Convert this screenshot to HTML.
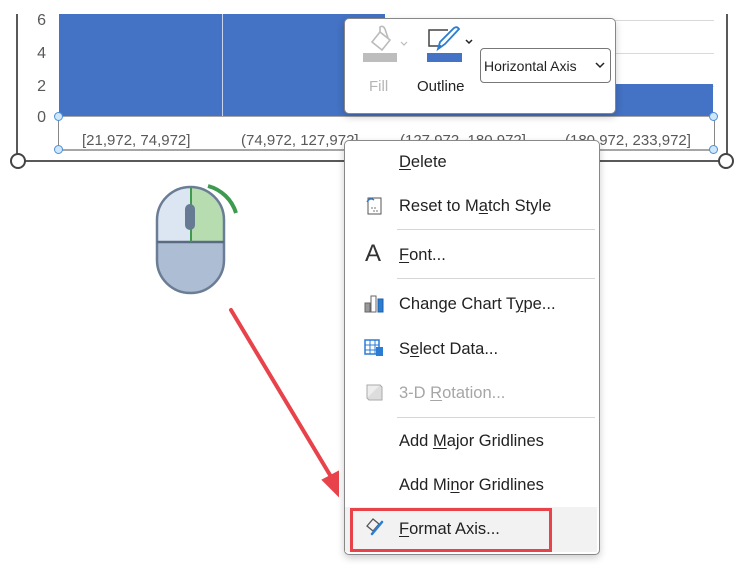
<!DOCTYPE html>
<html><head><meta charset="utf-8"><style>
body{margin:0;width:744px;height:565px;background:#fff;position:relative;overflow:hidden;font-family:"Liberation Sans",sans-serif;}
.a{position:absolute}
.yl{position:absolute;left:30px;font-size:16px;color:#595959;width:16px;text-align:right}
.xl{position:absolute;top:132px;font-size:15px;color:#595959;white-space:nowrap}
.mi{position:absolute;left:399px;font-size:16.5px;color:#222;white-space:nowrap}
.sep{position:absolute;left:397px;width:198px;height:1px;background:#d6d6d6}
u{text-decoration:underline;text-underline-offset:2px}
</style></head><body>
<div class="a" style="left:16px;top:14px;width:2px;height:147px;background:#595959"></div>
<div class="a" style="left:726px;top:14px;width:2px;height:147px;background:#595959"></div>
<div class="a" style="left:18px;top:160px;width:708px;height:2px;background:#595959"></div>
<div class="a" style="left:10px;top:153px;width:12px;height:12px;border:2.5px solid #444;border-radius:50%;background:#fff"></div>
<div class="a" style="left:718px;top:153px;width:12px;height:12px;border:2.5px solid #444;border-radius:50%;background:#fff"></div>
<div class="a" style="left:59px;top:20px;width:655px;height:1px;background:#d9d9d9"></div>
<div class="a" style="left:59px;top:53px;width:655px;height:1px;background:#d9d9d9"></div>
<div class="a" style="left:59px;top:86px;width:655px;height:1px;background:#d9d9d9"></div>
<div class="a" style="left:59px;top:14px;width:326px;height:102px;background:#4472c4"></div>
<div class="a" style="left:222px;top:14px;width:1px;height:102px;background:#c8d4ec"></div>
<div class="a" style="left:385px;top:84px;width:328px;height:32px;background:#4472c4"></div>
<div class="yl" style="top:12px">6</div>
<div class="yl" style="top:45px">4</div>
<div class="yl" style="top:78px">2</div>
<div class="yl" style="top:109px">0</div>
<div class="a" style="left:59px;top:116px;width:655px;height:1px;background:#a6a6a6"></div>
<div class="a" style="left:58px;top:116px;width:1px;height:34px;background:#888"></div>
<div class="a" style="left:714px;top:116px;width:1px;height:34px;background:#888"></div>
<div class="a" style="left:59px;top:149px;width:655px;height:2px;background:#a6a6a6"></div>
<div class="a" style="left:54px;top:112px;width:7px;height:7px;border:1px solid #4a90d9;border-radius:50%;background:#cfe6fb"></div>
<div class="a" style="left:54px;top:145px;width:7px;height:7px;border:1px solid #4a90d9;border-radius:50%;background:#cfe6fb"></div>
<div class="a" style="left:709px;top:112px;width:7px;height:7px;border:1px solid #4a90d9;border-radius:50%;background:#cfe6fb"></div>
<div class="a" style="left:709px;top:145px;width:7px;height:7px;border:1px solid #4a90d9;border-radius:50%;background:#cfe6fb"></div>
<div class="xl" style="left:82px">[21,972, 74,972]</div>
<div class="xl" style="left:241px">(74,972, 127,972]</div>
<div class="xl" style="left:400px">(127,972, 180,972]</div>
<div class="xl" style="left:565px">(180,972, 233,972]</div>

<div class="a" style="left:344px;top:18px;width:270px;height:94px;background:#fff;border:1px solid #888;border-radius:5px;box-shadow:0 3px 8px rgba(0,0,0,.2)"></div>
<svg class="a" style="left:360px;top:24px" width="50" height="40">
<path d="M12 18 L20 8 L30 16 L22 26 Z" fill="none" stroke="#bbb" stroke-width="1.6"/>
<path d="M20 8 L20 3 Q23 1 25 5 L28 14" fill="none" stroke="#bbb" stroke-width="1.6"/>
<path d="M41 18 l3 3 l3 -3" fill="none" stroke="#bbb" stroke-width="1.2"/>
<rect x="3" y="29" width="34" height="9" fill="#bdbdbd"/>
</svg>
<svg class="a" style="left:424px;top:24px" width="54" height="40">
<path d="M17 22 L5 22 L5 6 L24 6" fill="none" stroke="#444" stroke-width="1.5"/>
<path d="M14 25 L16 18 L30 4 Q33 2 35 5 L21 20 Z" fill="none" stroke="#2b7cd3" stroke-width="1.8"/>
<path d="M42 16 l3 3 l3 -3" fill="none" stroke="#222" stroke-width="1.5"/>
<rect x="3" y="29" width="35" height="9" fill="#4472c4"/>
</svg>
<div class="a" style="left:369px;top:78px;font-size:15px;color:#b5b5b5">Fill</div>
<div class="a" style="left:417px;top:78px;font-size:15px;color:#222">Outline</div>
<div class="a" style="left:480px;top:48px;width:129px;height:33px;border:1px solid #777;border-radius:4px;background:#fff"></div>
<div class="a" style="left:484px;top:58px;font-size:14px;color:#222">Horizontal Axis</div>
<svg class="a" style="left:595px;top:61px" width="10" height="8"><path d="M1 2 l4 4 l4 -4" fill="none" stroke="#222" stroke-width="1.5"/></svg>

<div class="a" style="left:344px;top:140px;width:254px;height:413px;background:#fff;border:1px solid #888;border-radius:5px;box-shadow:0 3px 8px rgba(0,0,0,.2)"></div>
<div class="mi" style="top:153px"><u>D</u>elete</div>
<svg class="a" style="left:364px;top:196px" width="20" height="20"><rect x="4" y="2" width="13" height="16" fill="none" stroke="#555" stroke-width="1"/><path d="M3 6 q3 -5 7 -2" fill="none" stroke="#2b7cd3" stroke-width="1.5"/><path d="M7 12 h6 M9 15 h5" stroke="#777" stroke-width="1" stroke-dasharray="2 1"/></svg>
<div class="mi" style="top:197px">Reset to M<u>a</u>tch Style</div>
<div class="sep" style="top:229px"></div>
<div class="a" style="left:365px;top:240px;font-size:24px;color:#333;font-family:'Liberation Sans',sans-serif">A</div>
<div class="mi" style="top:246px"><u>F</u>ont...</div>
<div class="sep" style="top:278px"></div>
<svg class="a" style="left:364px;top:294px" width="22" height="20"><rect x="1" y="9" width="5" height="9" fill="#999" stroke="#666"/><rect x="7" y="2" width="5" height="16" fill="#fff" stroke="#666"/><rect x="14" y="5" width="5" height="13" fill="#2b7cd3" stroke="#1f5fa8"/></svg>
<div class="mi" style="top:295px">Change Chart T<u>y</u>pe...</div>
<svg class="a" style="left:364px;top:338px" width="22" height="20"><rect x="1" y="2" width="14" height="14" fill="#fff" stroke="#2b7cd3" stroke-width="1.5"/><path d="M1 7 h14 M1 12 h14 M6 2 v14 M11 2 v14" stroke="#2b7cd3"/><rect x="12" y="9" width="7" height="9" fill="#2b7cd3"/></svg>
<div class="mi" style="top:340px">S<u>e</u>lect Data...</div>
<svg class="a" style="left:365px;top:383px" width="20" height="20"><rect x="2" y="2" width="13" height="13" fill="#eee" stroke="#aaa"/><path d="M15 2 l2 2 v13 h-13 l-2 -2" fill="#ddd" stroke="#aaa"/></svg>
<div class="mi" style="top:384px;color:#a6a6a6">3-D <u>R</u>otation...</div>
<div class="sep" style="top:417px"></div>
<div class="mi" style="top:432px">Add <u>M</u>ajor Gridlines</div>
<div class="mi" style="top:476px">Add Mi<u>n</u>or Gridlines</div>
<div class="a" style="left:345px;top:507px;width:252px;height:45px;background:#f2f2f2"></div>
<div class="a" style="left:350px;top:508px;width:196px;height:38px;border:3px solid #e8424a"></div>
<svg class="a" style="left:364px;top:516px" width="22" height="20"><path d="M3 10 L9 3 L15 8 L9 15 Z" fill="none" stroke="#555" stroke-width="1.3"/><path d="M8 18 L18 6" stroke="#2b7cd3" stroke-width="2.5" stroke-linecap="round"/></svg>
<div class="mi" style="top:520px"><u>F</u>ormat Axis...</div>

<svg class="a" style="left:150px;top:180px" width="100" height="120">
<path d="M40 7 A34 34 0 0 1 44 7 L41 62 L7 62 L7 40 A33 33 0 0 1 40 7 Z" fill="#dce6f2"/>
<path d="M41 7 A33 34 0 0 1 74 40 L74 62 L41 62 Z" fill="#b6dcb0"/>
<path d="M7 62 L74 62 L74 80 A33 33 0 0 1 7 80 Z" fill="#adbdd3"/>
<path d="M7 40 A33.5 33 0 0 1 74 40 L74 80 A33.5 33 0 0 1 7 80 Z" fill="none" stroke="#6b7d95" stroke-width="2.5"/>
<path d="M7 62 H74" stroke="#5a6a80" stroke-width="2.5"/>
<path d="M41 8 V62" stroke="#3e9a4e" stroke-width="2"/>
<rect x="35" y="24" width="10" height="26" rx="5" fill="#667a94"/>
<path d="M58 6 A40 40 0 0 1 86 33" fill="none" stroke="#3e9a4e" stroke-width="4"/>
</svg>
<svg class="a" style="left:0;top:0" width="744" height="565">
<path d="M231 310 L333 480" stroke="#e8424a" stroke-width="4" stroke-linecap="round"/>
<path d="M338 495 L323 480 L338 472 Z" fill="#e8424a" stroke="#e8424a" stroke-width="2"/>
</svg>
</body></html>
